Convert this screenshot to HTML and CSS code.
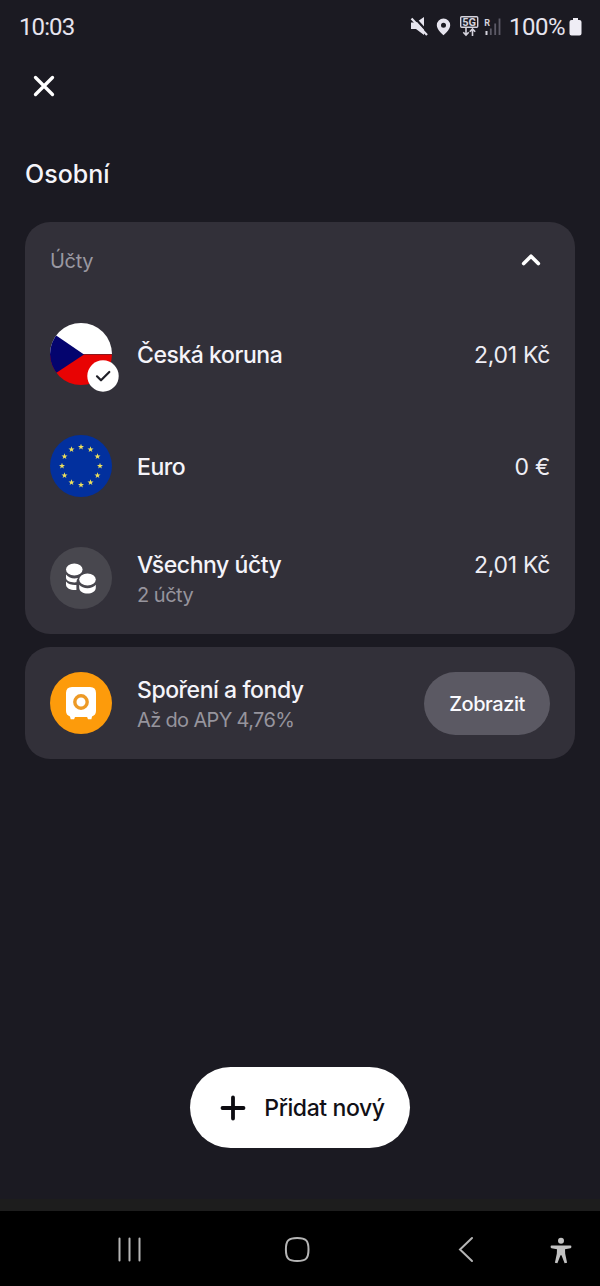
FILE: index.html
```html
<!DOCTYPE html>
<html lang="cs">
<head>
<meta charset="utf-8">
<title>Osobní</title>
<link rel="stylesheet" href="styles.css">
</head>
<body>
<div class="screen">
  <div class="status">
    <span class="time">10:03</span>
    <div class="status-right">
      <svg class="status-icons" width="94" height="26" viewBox="409 14 94 26">
        <path d="M411 22.500h5l8-5.500v18l-8-6h-5z" fill="#e6e4ee"/>
        <path d="M413.500 16.500l15 16.500" stroke="#1b1a22" stroke-width="2.200"/>
        <path d="M411.500 18.500l15.500 16.500" stroke="#e6e4ee" stroke-width="2.200"/>
        <path fill-rule="evenodd" d="M443.500 18.500a6.700 6.700 0 0 0-6.700 6.700c0 4.500 6.700 10 6.700 10s6.700-5.500 6.700-10a6.700 6.700 0 0 0-6.700-6.700zm0 4.200a2.500 2.500 0 1 1 0 5 2.500 2.500 0 0 1 0-5z" fill="#e6e4ee"/>
        <rect x="460.700" y="16.700" width="17" height="10.600" rx="1" fill="none" stroke="#d5d3dd" stroke-width="1.400"/>
        <text x="469.200" y="25.900" class="net">5G</text>
        <path d="M466 28v7m-2.700-2.700l2.700 2.700 2.700-2.700M472.500 36v-7m-2.700 2.700l2.700-2.700 2.700 2.700" fill="none" stroke="#d5d3dd" stroke-width="1.600"/>
        <text x="487.200" y="25.500" class="roam">R</text>
        <path d="M486.500 31v4" stroke="#d5d3dd" stroke-width="2"/>
        <path d="M490.800 28.500V35M495.200 23.500V35M499.500 18.500V35" stroke="#5c5a66" stroke-width="1.800"/>
      </svg>
      <span class="percent">100%</span>
      <svg width="13" height="18" viewBox="0 0 13 18"><path d="M4 0h5v2h1.500Q12.500 2 12.500 4v11.500q0 2-2 2h-8q-2 0-2-2V4q0-2 2-2H4z" fill="#efedf5"/></svg>
    </div>
  </div>
  <div class="topbar">
    <svg width="24" height="24" viewBox="0 0 24 24"><path d="M3.500 3.500l17 17m0-17l-17 17" stroke="#fff" stroke-width="3.300" stroke-linecap="round"/></svg>
  </div>
  <h1 class="heading">Osobní</h1>
  <main class="cards">
    <section class="card">
      <header class="card-head">
        <span class="label">Účty</span>
        <svg width="22" height="16" viewBox="0 0 22 16"><path d="M3.700 11.500L11 4.300l7.300 7.200" fill="none" stroke="#fff" stroke-width="3.700" stroke-linecap="round" stroke-linejoin="round"/></svg>
      </header>
      <div class="row">
        <div class="avatar">
          <svg class="disc" viewBox="0 0 62 62"><path d="M0 0h62v31H0z" fill="#fff"/><path d="M0 31.500h62V62H0z" fill="#e80303"/><path d="M-12 0L34 31.500-12 62z" fill="#04046e"/></svg>
          <svg class="badge" viewBox="0 0 32 32"><circle cx="16" cy="16" r="15.700" fill="#fff"/><path d="M10 16.300l4 4 8.300-8.300" fill="none" stroke="#202028" stroke-width="2.200" stroke-linecap="round" stroke-linejoin="round"/></svg>
        </div>
        <span class="name">Česká koruna</span>
        <span class="amount">2,01 Kč</span>
      </div>
      <div class="row">
        <div class="avatar">
          <svg class="disc" viewBox="0 0 62 62"><defs><path id="star" d="M0-3.200L.8-1H3L1.200.4 1.900 2.600 0 1.300-1.900 2.600-1.200.4-3-1h2.200z" fill="#eee05c"/></defs><path d="M0 0h62v62H0z" fill="#02309e"/>
            <use href="#star" x="31" y="12"/><use href="#star" x="40.500" y="14.500"/><use href="#star" x="47.500" y="21.500"/><use href="#star" x="50" y="31"/><use href="#star" x="47.500" y="40.500"/><use href="#star" x="40.500" y="47.500"/><use href="#star" x="31" y="50"/><use href="#star" x="21.500" y="47.500"/><use href="#star" x="14.500" y="40.500"/><use href="#star" x="12" y="31"/><use href="#star" x="14.500" y="21.500"/><use href="#star" x="21.500" y="14.500"/></svg>
        </div>
        <span class="name">Euro</span>
        <span class="amount">0 €</span>
      </div>
      <div class="row double">
        <div class="avatar">
          <svg class="disc" viewBox="0 0 62 62"><path d="M0 0h62v62H0z" fill="#48474e"/>
            <g fill="#fff"><ellipse cx="24.300" cy="22.500" rx="8.300" ry="6"/><path d="M16 27.500c3 4 8 4.500 12 3.500q-1.600 1.800-1.600 4.300c-5 .5-10.400-1-10.400-4.800zM16 34.500c2.500 3 6.500 3.800 10.400 3.500v5c-5 .5-10.400-1.500-10.400-5.500z"/><ellipse cx="37.500" cy="32.500" rx="8.300" ry="6"/><path d="M29.200 37.800c3.500 4.500 13.100 4.500 16.600 0v2.700c0 8-16.600 8-16.600 0z"/></g></svg>
        </div>
        <div class="stack"><span class="name">Všechny účty</span><span class="sub">2 účty</span></div>
        <span class="amount">2,01 Kč</span>
      </div>
    </section>
    <section class="card">
      <div class="row double">
        <div class="avatar">
          <svg class="disc" viewBox="0 0 62 62"><path d="M0 0h62v62H0z" fill="#fd9b0b"/><path d="M22 15h18q6 0 6 6v18q0 4-4 5.500l-.6 2.800h-3.400l-.9-2.300H25l-.9 2.300h-3.400L20 44.500q-4-1.500-4-5.500V21q0-6 6-6z" fill="#fff"/><circle cx="31" cy="30" r="6.200" fill="none" stroke="#ed9a26" stroke-width="3.400"/></svg>
        </div>
        <div class="stack"><span class="name">Spoření a fondy</span><span class="sub apy">Až do APY 4,76%</span></div>
        <button class="show"><span>Zobrazit</span></button>
      </div>
    </section>
  </main>
  <div class="footer">
    <button class="add"><svg width="26" height="26" viewBox="0 0 26 26"><path d="M13 2.500v21M2.500 13h21" stroke="#0c0b10" stroke-width="3.800" stroke-linecap="round"/></svg><span>Přidat nový</span></button>
  </div>
  <nav class="nav">
    <svg width="600" height="75" viewBox="0 1211 600 75" fill="none" stroke="#b5b5b5" stroke-width="2" stroke-linecap="round">
      <path d="M119.500 1238.500v22M129.500 1238.500v22M139.500 1238.500v22"/>
      <path d="M297.200 1238c8.800 0 11.300 2.500 11.300 11.500s-2.500 11.500-11.300 11.500-11.300-2.500-11.300-11.500 2.500-11.500 11.300-11.500z"/>
      <path d="M472 1238l-12 11.500 12 11.500"/>
      <g fill="#c2c2c2" stroke="none"><circle cx="561" cy="1240.700" r="3"/><path d="M551.500 1245.600h19q.9 0 .9 1.100t-.9 1.500l-5.500 1 .2 4.500 1.900 9-2.500.6-3.100-8h-1l-3.100 8-2.500-.6 1.900-9 .2-4.500-5.500-1q-.9-.4-.9-1.500t.9-1.100z"/></g>
    </svg>
  </nav>
</div>
</body>
</html>
```
FILE: styles.css
```css
* { box-sizing: border-box; }
body { margin: 0; background: #1b1a22; font-family: Inter, "Liberation Sans", sans-serif; color: #f5f4fa; }
.screen { width: 600px; height: 1286px; display: flex; flex-direction: column; }
svg { display: block; flex: none; }
span { white-space: nowrap; }
.status { height: 54px; padding: 0 18px 0 19px; display: flex; align-items: center; justify-content: space-between; font: 24px/28px Roboto, sans-serif; color: #e6e4ee; }
.status-right { display: flex; align-items: center; }
.time { letter-spacing: -0.9px; }
.percent { margin: 0 4px 0 6px; letter-spacing: -0.5px; }
.net { font: 700 11px Roboto, sans-serif; fill: #d5d3dd; text-anchor: middle; }
.roam { font: 700 9px Roboto, sans-serif; fill: #d5d3dd; text-anchor: middle; }
.topbar { height: 64px; padding: 20px 32px; }
.heading { margin: 0; height: 104px; padding: 41px 25px 0; font-size: 25px; line-height: 31px; font-weight: 500; }
.cards { padding: 0 25px; display: flex; flex-direction: column; gap: 13px; }
.card { background: #323039; border-radius: 25px; }
.card-head { height: 76px; padding: 0 33px 0 25px; display: flex; align-items: center; justify-content: space-between; }
.label { padding-top: 2px; font-size: 20px; letter-spacing: -0.3px; color: #9a98a1; }
.row { height: 112px; padding: 0 25px; display: flex; align-items: center; }
.avatar { position: relative; width: 62px; height: 62px; margin-right: 25px; flex: none; }
.disc { width: 62px; height: 62px; border-radius: 50%; }
.badge { position: absolute; left: 37px; top: 37px; width: 32px; height: 32px; }
.name { padding-top: 2px; font-size: 23px; line-height: 30px; font-weight: 500; letter-spacing: -0.45px; }
.amount { margin-left: auto; padding-top: 2px; font-size: 23px; line-height: 30px; letter-spacing: -0.3px; color: #eeedf4; }
.stack { display: flex; flex-direction: column; padding-top: 3px; }
.double .amount { align-self: flex-start; margin-top: 26px; }
.sub { font-size: 20px; line-height: 31px; letter-spacing: -0.5px; color: #96949d; }
.apy { letter-spacing: -0.65px; }
.show { margin-left: auto; width: 126px; height: 63px; border: 0; border-radius: 32px; background: #5b5963; color: #fafafe; font: 500 20px Inter, sans-serif; letter-spacing: -0.45px; padding: 1px 0 0; }
.footer { margin-top: auto; height: 144px; border-bottom: 12px solid #1d1d1d; display: flex; justify-content: center; align-items: flex-start; }
.add { width: 220px; height: 81px; border: 0; border-radius: 41px; background: #fff; color: #111016; display: flex; align-items: center; justify-content: center; gap: 18px; font: 500 23px Inter, sans-serif; letter-spacing: -0.4px; padding: 1px 0 0 5px; }
.nav { height: 75px; background: #000; }
```
